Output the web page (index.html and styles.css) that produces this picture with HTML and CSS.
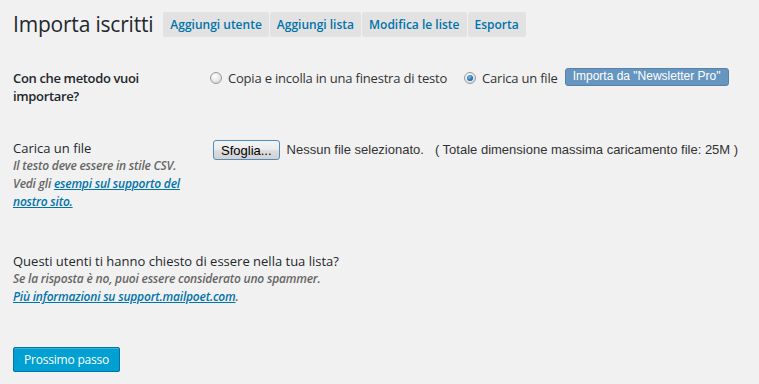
FILE: index.html
```html
<!DOCTYPE html>
<html>
<head>
    <meta charset="utf-8" />
    <title>Importa iscritti</title>
    <link rel="stylesheet" href="styles.css">
</head>
<body>
    <div id="wrap">
        <div class="head">
            <h2 class="title">Importa iscritti</h2>
            <a href="#" class="tab">Aggiungi utente</a>
            <a href="#" class="tab">Aggiungi lista</a>
            <a href="#" class="tab">Modifica le liste</a>
            <a href="#" class="tab">Esporta</a>
        </div>

        <div class="row row-method">
            <div class="label">
                <div class="label-title strong">Con che metodo vuoi importare?</div>
            </div>
            <div class="field">
                <label class="choice"><span class="radio"></span>Copia e incolla in una finestra di testo</label>
                <label class="choice"><span class="radio checked"></span>Carica un file</label>
                <a href="#" class="import-btn">Importa da "Newsletter Pro"</a>
            </div>
        </div>

        <div class="row row-file">
            <div class="label">
                <div class="label-title">Carica un file</div>
                <p class="desc">Il testo deve essere in stile CSV.<br />
                    Vedi gli <a href="#">esempi sul supporto del nostro sito.</a></p>
            </div>
            <div class="field">
                <span class="browse">Sfoglia...</span>
                <span class="nofile">Nessun file selezionato.</span>
                <span class="maxsize">( Totale dimensione massima caricamento file: 25M )</span>
            </div>
        </div>

        <div class="row row-consent">
            <div class="label-title">Questi utenti ti hanno chiesto di essere nella tua lista?</div>
            <p class="desc">Se la risposta è no, puoi essere considerato uno spammer.<br />
                <a href="#">Più informazioni su support.mailpoet.com</a>.</p>
        </div>

        <input type="button" class="next-btn" value="Prossimo passo" />
    </div>
</body>
</html>
```

FILE: styles.css
```css
body{
    margin:0;
    background:#f1f1f1;
    font-family:"Open Sans", sans-serif;
    font-size:13px;
    color:#444;
}
#wrap{
    padding:0 13px;
}
.head{
    display:flex;
    align-items:center;
    padding-top:10px;
}
.title{
    margin:0 10px 0 0;
    font-size:21px;
    font-weight:400;
    letter-spacing:-0.2px;
    line-height:29px;
    color:#23282d;
}
.tab{
    margin-right:1px;
    padding:4px 7px;
    line-height:17px;
    background:#e2e2e2;
    border-radius:2px;
    color:#0073aa;
    font-size:12px;
    font-weight:600;
    text-decoration:none;
}
.row{
    display:flex;
}
.row-method{
    margin-top:30px;
}
.row-file{
    margin-top:34px;
}
.row-consent{
    display:block;
    margin-top:41px;
}
.label{
    width:187px;
    padding-right:10px;
    flex-shrink:0;
}
.label-title{
    font-size:13px;
    line-height:18px;
    color:#23282d;
}
.strong{
    font-weight:600;
    letter-spacing:-0.35px;
}
.desc{
    margin:0;
    font-size:12px;
    letter-spacing:-0.2px;
    line-height:18px;
    font-style:italic;
    font-weight:600;
    color:#666;
}
.desc a{
    color:#0073aa;
}
.field{
    display:flex;
    align-items:center;
    height:18px;
    font-size:13px;
    letter-spacing:-0.2px;
    color:#333;
    white-space:nowrap;
}
.choice{
    display:flex;
    align-items:center;
    margin-right:17px;
}
.radio{
    width:10px;
    height:10px;
    margin-right:6px;
    border:1px solid #9a9a9a;
    border-radius:50%;
    background:radial-gradient(circle at 40% 35%, #fff 0, #e6e6e6 55%, #c8c8c8 100%);
    position:relative;
}
.radio.checked::after{
    content:"";
    position:absolute;
    left:2px;
    top:2px;
    width:6px;
    height:6px;
    border-radius:50%;
    background:radial-gradient(circle at 40% 35%, #6fc3f0 0, #1e6fb0 60%, #0f3f66 100%);
}
.choice + .choice{
    margin-right:7px;
}
.import-btn{
    display:inline-block;
    height:18px;
    padding:0 7px;
    line-height:16px;
    background:#6696c0;
    border:1px solid #5782a8;
    border-radius:3px;
    color:#fff;
    font:12px "Liberation Sans", Arial, sans-serif;
    letter-spacing:0;
    text-decoration:none;
    box-sizing:border-box;
    margin-top:-3px;
}
.row-file .field{
    align-items:flex-start;
    height:auto;
    padding-top:1px;
    font:13px "Liberation Sans", Arial, sans-serif;
    letter-spacing:0;
}
.browse{
    height:20px;
    margin-left:3px;
    padding:0 7px;
    line-height:19px;
    border:1px solid #4f8dbf;
    border-radius:3px;
    background:linear-gradient(#f3f3f3, #ececec 45%, #dcdcdc 55%, #d2d2d2);
    color:#000;
    box-sizing:border-box;
    font-size:13px;
}
.nofile{
    margin-left:7px;
    line-height:20px;
}
.maxsize{
    margin-left:11px;
    line-height:20px;
}
.next-btn{
    display:block;
    margin-top:41px;
    height:25px;
    padding:0 10px;
    border:1px solid #0073aa;
    border-radius:2px;
    background:#00a0d2;
    box-shadow:inset 0 1px 0 rgba(120,200,230,.5), 0 1px 0 rgba(0,0,0,.15);
    color:#fff;
    font-family:"Open Sans", sans-serif;
    font-size:12px;
    letter-spacing:-0.2px;
    line-height:23px;
}
```
